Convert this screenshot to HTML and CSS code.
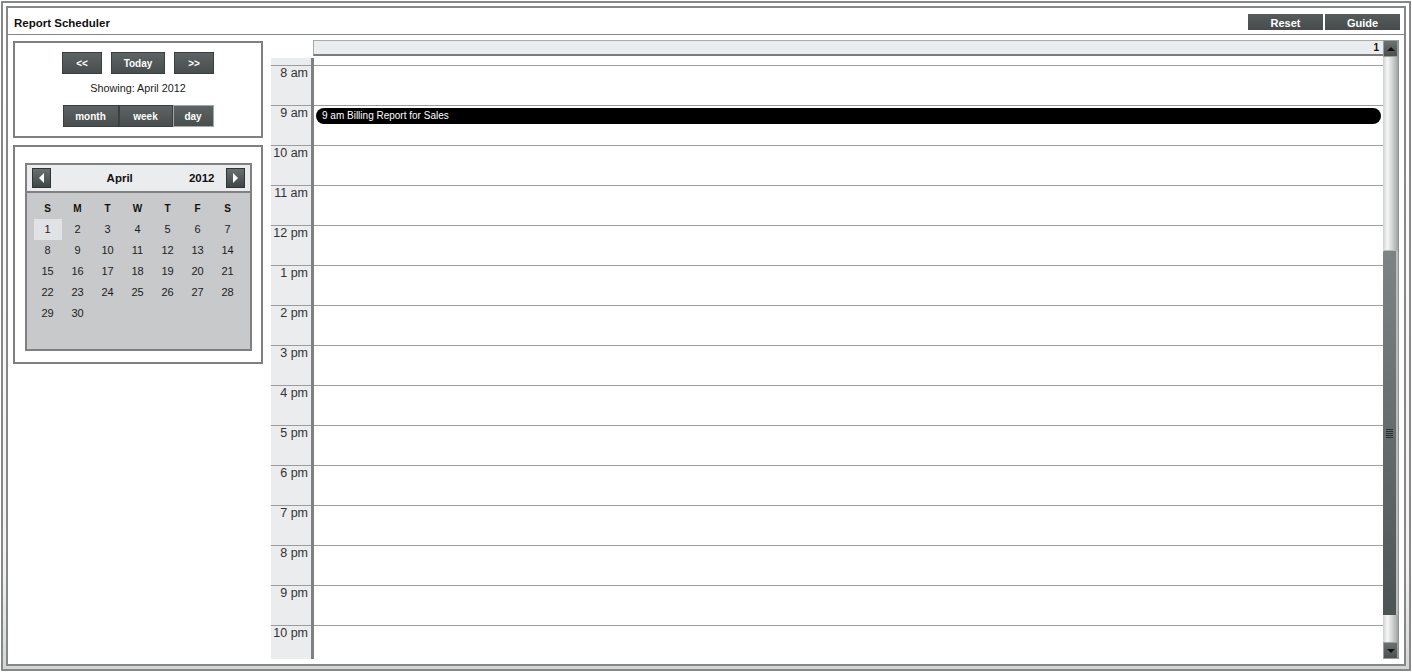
FILE: index.html
```html
<!DOCTYPE html>
<html lang="en">
<head>
    <meta charset="UTF-8">
    <meta name="viewport" content="width=device-width, initial-scale=1.0">
    <title>Report Scheduler</title>
    <link rel="stylesheet" href="styles.css">
</head>
<body>
    <div class="outer">
        <div class="frame">
            <header class="titlebar">
                <h1>Report Scheduler</h1>
                <div class="title-actions">
                    <button class="btn title-btn">Reset</button>
                    <button class="btn title-btn">Guide</button>
                </div>
            </header>

            <div class="content">
                <aside class="sidebar">
                    <div class="panel nav-panel">
                        <div class="nav-row">
                            <button class="btn nav-btn">&lt;&lt;</button>
                            <button class="btn nav-btn today">Today</button>
                            <button class="btn nav-btn">&gt;&gt;</button>
                        </div>
                        <p class="showing">Showing: April 2012</p>
                        <div class="views">
                            <button class="btn view month">month</button>
                            <button class="btn view week">week</button>
                            <button class="btn view day active">day</button>
                        </div>
                    </div>

                    <div class="panel cal-panel">
                        <div class="minical">
                            <div class="minical-head">
                                <button class="arrow prev"></button>
                                <span class="month-name">April</span>
                                <span class="year">2012</span>
                                <button class="arrow next"></button>
                            </div>
                            <div class="minical-grid">
                                <span class="dow">S</span><span class="dow">M</span><span class="dow">T</span><span class="dow">W</span><span class="dow">T</span><span class="dow">F</span><span class="dow">S</span>
                                <span class="d current">1</span><span class="d">2</span><span class="d">3</span><span class="d">4</span><span class="d">5</span><span class="d">6</span><span class="d">7</span>
                                <span class="d">8</span><span class="d">9</span><span class="d">10</span><span class="d">11</span><span class="d">12</span><span class="d">13</span><span class="d">14</span>
                                <span class="d">15</span><span class="d">16</span><span class="d">17</span><span class="d">18</span><span class="d">19</span><span class="d">20</span><span class="d">21</span>
                                <span class="d">22</span><span class="d">23</span><span class="d">24</span><span class="d">25</span><span class="d">26</span><span class="d">27</span><span class="d">28</span>
                                <span class="d">29</span><span class="d">30</span>
                            </div>
                        </div>
                    </div>
                </aside>

                <section class="schedule">
                    <div class="sched-main">
                        <div class="sched-head">1</div>
                        <div class="sched-body">
                            <div class="time-col">
                                <div class="slot-pad"></div>
                                <div class="slot">8 am</div>
                                <div class="slot">9 am</div>
                                <div class="slot">10 am</div>
                                <div class="slot">11 am</div>
                                <div class="slot">12 pm</div>
                                <div class="slot">1 pm</div>
                                <div class="slot">2 pm</div>
                                <div class="slot">3 pm</div>
                                <div class="slot">4 pm</div>
                                <div class="slot">5 pm</div>
                                <div class="slot">6 pm</div>
                                <div class="slot">7 pm</div>
                                <div class="slot">8 pm</div>
                                <div class="slot">9 pm</div>
                                <div class="slot">10 pm</div>
                            </div>
                            <div class="day-col">
                                <div class="slot-pad"></div>
                                <div class="slot"></div>
                                <div class="slot">
                                    <div class="event">9 am Billing Report for Sales</div>
                                </div>
                                <div class="slot"></div>
                                <div class="slot"></div>
                                <div class="slot"></div>
                                <div class="slot"></div>
                                <div class="slot"></div>
                                <div class="slot"></div>
                                <div class="slot"></div>
                                <div class="slot"></div>
                                <div class="slot"></div>
                                <div class="slot"></div>
                                <div class="slot"></div>
                                <div class="slot"></div>
                                <div class="slot"></div>
                            </div>
                        </div>
                    </div>

                    <div class="vscroll">
                        <div class="scroll-btn up"></div>
                        <div class="track">
                            <div class="thumb"></div>
                        </div>
                        <div class="scroll-btn down"></div>
                    </div>
                </section>
            </div>
        </div>
    </div>
</body>
</html>
```

FILE: styles.css
```css
:root {
    --frame: #858887;
    --panel-border: #808080;
    --light: #ebecee;
    --line: #9c9c9c;
    --text: #222;
}

* {
    box-sizing: border-box;
    margin: 0;
    padding: 0;
}

body {
    font-family: "Liberation Sans", Arial, sans-serif;
    background-color: #fff;
    color: var(--text);
}

.outer {
    margin: 1px;
    height: 670px;
    border: 2px solid var(--frame);
    padding: 3px;
    background: linear-gradient(to bottom, #fff 0%, #f2f2f2 85%, #d4d6d5 100%);
}

.frame {
    height: 100%;
    border: 2px solid var(--frame);
    background-color: #fff;
    display: flex;
    flex-direction: column;
}

/* Title bar */
.titlebar {
    height: 27px;
    flex-shrink: 0;
    border-bottom: 1px solid var(--frame);
    display: flex;
    align-items: flex-start;
    justify-content: space-between;
    padding: 6px 4px 0 6px;
}

h1 {
    font-size: 11.5px;
    font-weight: 700;
    line-height: 14px;
    margin-top: 2px;
    color: #111;
}

.title-actions {
    display: flex;
    gap: 2px;
}

.btn {
    font-family: inherit;
    font-weight: 700;
    color: #fff;
    background: linear-gradient(to bottom, #5d6463, #474e4d);
    border: 1px solid #3a403f;
    cursor: pointer;
}

.title-btn {
    width: 75px;
    height: 16px;
    font-size: 11px;
    line-height: 13px;
    padding-top: 3px;
    border: none;
    background: linear-gradient(to bottom, #555c5b, #454c4b);
}

/* Layout */
.content {
    flex: 1;
    min-height: 0;
    display: flex;
    gap: 8px;
    padding: 5px 5px 0 5px;
}

.sidebar {
    width: 250px;
    flex-shrink: 0;
}

.panel {
    border: 2px solid var(--panel-border);
    background-color: #fff;
}

.nav-panel {
    margin-top: 1px;
    height: 97px;
    padding-top: 9px;
}

.nav-row {
    display: flex;
    justify-content: center;
    gap: 9px;
}

.nav-btn {
    width: 40px;
    height: 22px;
    font-size: 10px;
}

.nav-btn.today {
    width: 54px;
}

.showing {
    margin-top: 8px;
    text-align: center;
    font-size: 10.8px;
    line-height: 13px;
    color: #1a1a1a;
}

.views {
    display: flex;
    justify-content: center;
    margin-top: 10px;
}

.view {
    height: 22px;
    font-size: 10px;
}

.view.month { width: 56px; }
.view.week { width: 54px; }
.view.day { width: 41px; }

.view.active {
    border-color: #a3a7a6;
}

/* Mini calendar */
.cal-panel {
    margin-top: 7px;
    height: 219px;
    padding-top: 16px;
}

.minical {
    width: 227px;
    margin: 0 auto;
    border: 2px solid var(--panel-border);
    background-color: #c8c9cb;
}

.minical-head {
    height: 28px;
    display: flex;
    align-items: center;
    padding: 0 5px;
    background-color: var(--light);
    border-bottom: 2px solid var(--panel-border);
    font-size: 11.5px;
    font-weight: 700;
    color: #111;
}

.arrow {
    width: 19px;
    height: 20px;
    border: 1px solid #2f3534;
    background: linear-gradient(to bottom, #6a706f, #3f4645);
    display: flex;
    align-items: center;
    justify-content: center;
    cursor: pointer;
}

.arrow::before {
    content: "";
    width: 0;
    height: 0;
    border-top: 5px solid transparent;
    border-bottom: 5px solid transparent;
}

.arrow.prev::before {
    border-right: 5px solid #fff;
}

.arrow.next::before {
    border-left: 5px solid #fff;
}

.month-name {
    flex: 1;
    text-align: center;
}

.year {
    margin-right: 11px;
}

.minical-grid {
    display: grid;
    grid-template-columns: repeat(7, 28px);
    column-gap: 2px;
    grid-auto-rows: 21px;
    padding: 5px 0 25px 7px;
}

.minical-grid span {
    text-align: center;
    line-height: 21px;
    font-size: 11px;
    color: #1c1c1c;
}

.minical-grid .dow {
    font-weight: 700;
    font-size: 10px;
    color: #111;
}

.minical-grid .current {
    background-color: #e1e2e5;
}

/* Day schedule */
.schedule {
    flex: 1;
    height: 619px;
    display: flex;
    min-width: 0;
}

.sched-main {
    flex: 1;
    min-width: 0;
    display: flex;
    flex-direction: column;
}

.sched-head {
    margin-left: 42px;
    height: 16px;
    flex-shrink: 0;
    background-color: var(--light);
    border-top: 1px solid #a9abaa;
    border-left: 1px solid #a9abaa;
    border-bottom: 2px solid #7b7d7c;
    text-align: right;
    padding-right: 4px;
    font-size: 10px;
    font-weight: 700;
    line-height: 13px;
    color: #111;
}

.sched-body {
    margin-top: 2px;
    flex: 1;
    min-height: 0;
    display: flex;
    overflow: hidden;
}

.time-col {
    width: 43px;
    flex-shrink: 0;
    background-color: var(--light);
    border-right: 3px solid #808080;
}

.day-col {
    flex: 1;
}

.slot-pad {
    height: 7px;
}

.slot {
    height: 40px;
    border-top: 1px solid var(--line);
}

.time-col .slot {
    text-align: right;
    padding: 0 3px 0 0;
    font-size: 12.5px;
    line-height: 14px;
    color: #333;
    white-space: nowrap;
}

.event {
    margin: 2px 2px 0 2px;
    height: 16px;
    background-color: #000;
    border-radius: 8px;
    color: #fff;
    font-size: 10px;
    line-height: 16px;
    padding-left: 6px;
}

/* Scrollbar */
.vscroll {
    width: 16px;
    flex-shrink: 0;
    display: flex;
    flex-direction: column;
    border-right: 1px solid #8f9392;
}

.scroll-btn {
    height: 17px;
    flex-shrink: 0;
    background: linear-gradient(to bottom, #6b7170, #4b5251);
    border: 1px solid #9a9e9d;
    display: flex;
    align-items: center;
    justify-content: center;
}

.scroll-btn::before {
    content: "";
    width: 0;
    height: 0;
    border-left: 4px solid transparent;
    border-right: 4px solid transparent;
}

.scroll-btn.up::before {
    border-bottom: 4px solid #111;
}

.scroll-btn.down::before {
    border-top: 4px solid #111;
}

.track {
    flex: 1;
    background: linear-gradient(to right, #cfd2d1 0%, #f6f6f6 30%, #c8cbca 70%, #9fa3a2 100%);
}

.thumb {
    margin-top: 193px;
    height: 365px;
    background: linear-gradient(to bottom, #7e8483, #4d5453);
    border-top: 1px solid #b5b9b8;
    border-right: 2px solid #b9bdbc;
    border-radius: 2px 2px 0 0;
    display: flex;
    align-items: center;
    justify-content: center;
}

.thumb::after {
    content: "";
    width: 7px;
    height: 9px;
    background: repeating-linear-gradient(to bottom, #2a302f 0, #2a302f 1px, transparent 1px, transparent 2px);
}
```
